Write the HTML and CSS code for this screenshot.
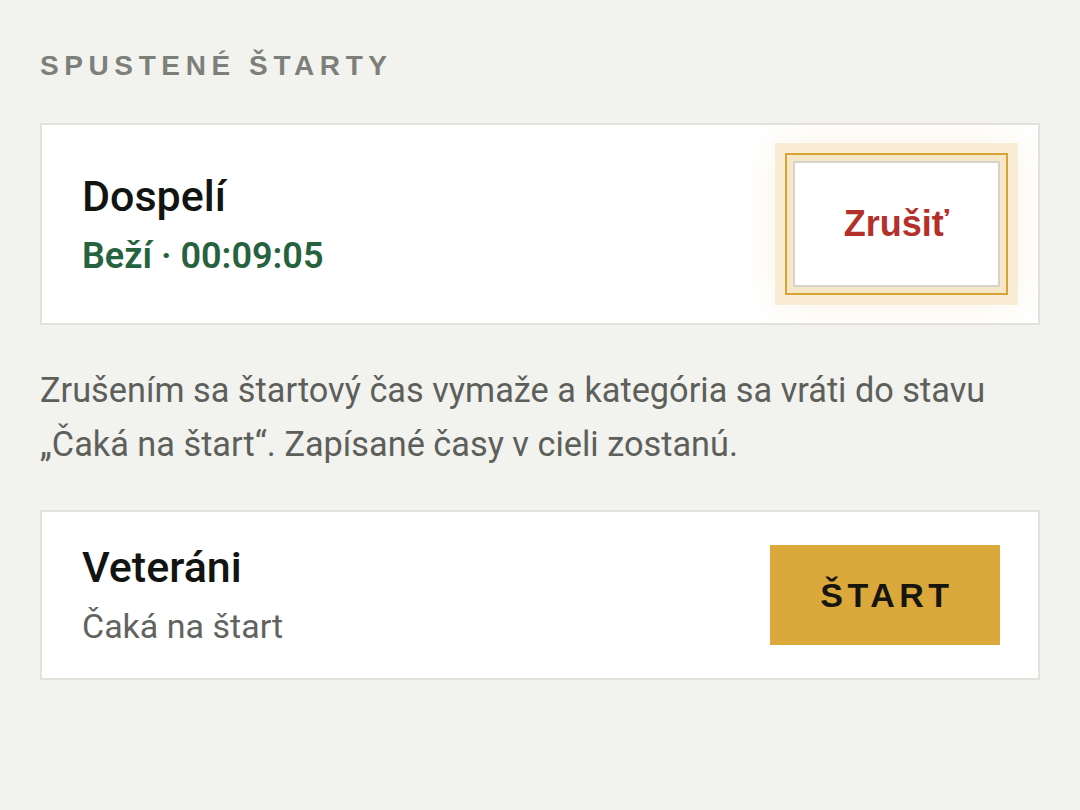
FILE: index.html
```html
<!DOCTYPE html>
<html lang="sk">
<head>
<meta charset="UTF-8">
<meta name="viewport" content="width=device-width,minimum-scale=1,initial-scale=1">
<title>Spustené štarty</title>
<link rel="stylesheet" href="styles.css">
</head>
<body>

<main class="page">
	<h2 class="section-title">Spustené štarty</h2>

	<div class="race">
		<div class="race-info">
			<div class="race-name">Dospelí</div>
			<div class="race-status running">Beží · 00:09:05</div>
		</div>
		<button class="btn-cancel">Zrušiť</button>
	</div>

	<p class="note">Zrušením sa štartový čas vymaže a kategória sa vráti do stavu „Čaká na štart“. Zapísané časy v cieli zostanú.</p>

	<div class="race race-waiting">
		<div class="race-info">
			<div class="race-name">Veteráni</div>
			<div class="race-status">Čaká na štart</div>
		</div>
		<button class="btn-start">Štart</button>
	</div>
</main>

</body>
</html>
```

FILE: styles.css
```css
body {
	margin: 0;
	background: #f2f2ee;
	font-family: Roboto, "Liberation Sans", sans-serif;
}
.page {
	padding: 50px 40px 40px;
}

.section-title {
	margin: 0 0 41px;
	font: bold 28px/32px "Liberation Sans", Arial, sans-serif;
	letter-spacing: 5.6px;
	text-transform: uppercase;
	color: #7d807a;
}

.race {
	display: flex;
	justify-content: space-between;
	align-items: center;
	padding: 36px 38px 36px 40px;
	border: 2px solid #e2e2dd;
	background: #fff;
}
.race-waiting {
	padding-top: 33px;
	padding-bottom: 33px;
}
.race-name {
	font-size: 43px;
	line-height: 44px;
	font-weight: 500;
	color: #121411;
}
.race-status {
	margin-top: 18px;
	font-size: 34px;
	line-height: 38px;
	color: #61635e;
}
.race-status.running {
	margin-top: 20px;
	font-size: 36px;
	line-height: 36px;
	font-weight: 600;
	color: #27623f;
}

.btn-cancel {
	box-sizing: border-box;
	width: 207px;
	height: 126px;
	margin: 0;
	padding: 0;
	border: 2px solid #d6d3cb;
	background: #fff;
	font: bold 36px "Liberation Sans", Arial, sans-serif;
	color: #b3302b;
	box-shadow: 0 0 0 6px #f6e7c9, 0 0 0 8px #d9a436, 0 0 0 18px #f8ecd5, 0 0 30px 18px rgba(219, 168, 58, .12);
	cursor: pointer;
}

.btn-start {
	width: 230px;
	height: 100px;
	margin: 0;
	padding: 0 0 0 4px;
	border: 0;
	background: #dba93b;
	font: bold 34px "Liberation Sans", Arial, sans-serif;
	letter-spacing: 4.5px;
	text-transform: uppercase;
	color: #16160f;
	cursor: pointer;
}

.note {
	margin: 38px 0 39px;
	font-size: 34.3px;
	line-height: 54px;
	color: #5d5f5a;
}
```
